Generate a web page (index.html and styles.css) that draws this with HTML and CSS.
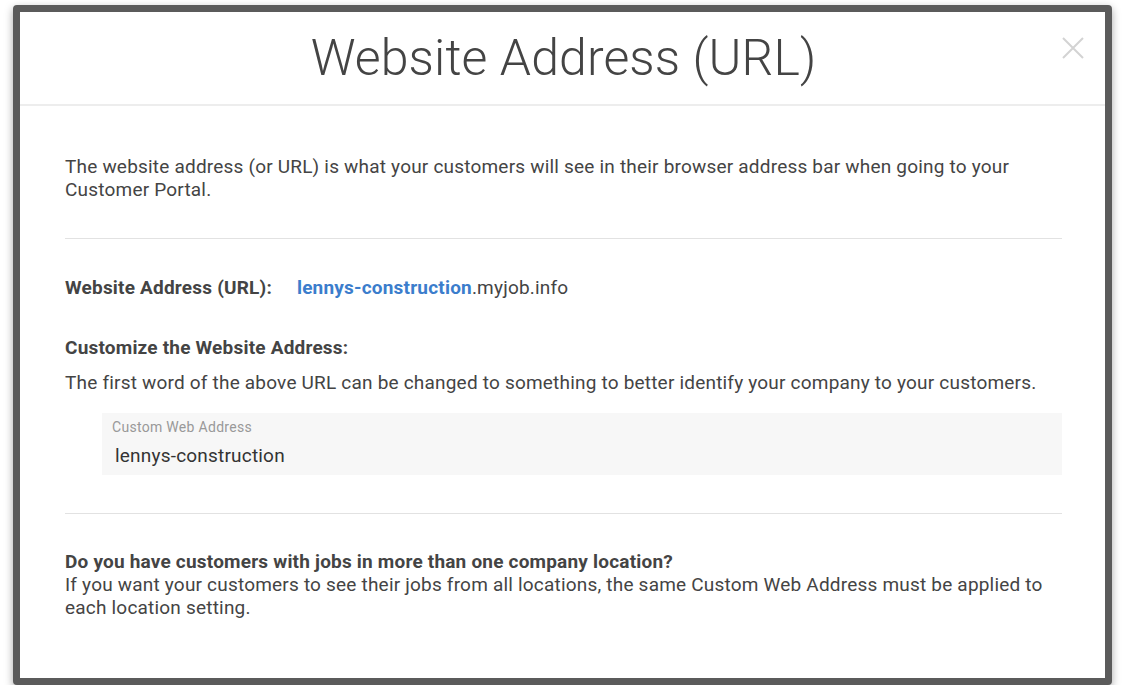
FILE: index.html
```html
<!DOCTYPE html>
<html>
<head>
  <title>Website Address (URL)</title>
  <meta name="viewport" content="width=device-width, initial-scale=1.0">
  <link rel="stylesheet" href="styles.css">
</head>
<body>

  <div class="modal">
    <div class="modal-header">
      <h1>Website Address (URL)</h1>
      <button class="close-btn" aria-label="Close">
        <svg width="22" height="22" viewBox="0 0 22 22">
          <path d="M1 1 L21 21 M21 1 L1 21" stroke="#d3d3d3" stroke-width="2" fill="none"/>
        </svg>
      </button>
    </div>

    <div class="modal-body">
      <p class="intro">The website address (or URL) is what your customers will see in their browser address bar when going to your Customer Portal.</p>

      <hr>

      <div class="url-row">
        <strong>Website Address (URL):</strong>
        <span class="url"><a href="#">lennys-construction</a>.myjob.info</span>
      </div>

      <h3>Customize the Website Address:</h3>
      <p class="help">The first word of the above URL can be changed to something to better identify your company to your customers.</p>

      <div class="field">
        <label for="custom-address">Custom Web Address</label>
        <input type="text" id="custom-address" value="lennys-construction">
      </div>

      <hr class="lower">

      <h3 class="question">Do you have customers with jobs in more than one company location?</h3>
      <p class="note">If you want your customers to see their jobs from all locations, the same Custom Web Address must be applied to each location setting.</p>
    </div>
  </div>

</body>
</html>
```

FILE: styles.css
```css
body {
  margin: 0;
  background-color: #fff;
  font-family: Roboto, "Liberation Sans", sans-serif;
  color: #444;
}
.modal {
  margin: 5px 0 0 13px;
  width: 1085px;
  height: 666px;
  border: 7px solid #5b5b5b;
  border-radius: 4px;
  background-color: #fff;
  box-shadow: 0 3px 8px rgba(0, 0, 0, 0.35);
  overflow: hidden;
}
.modal-header {
  position: relative;
  height: 92px;
  border-bottom: 2px solid #ededed;
  display: flex;
  align-items: center;
  justify-content: center;
}
.modal-header h1 {
  margin: 0 0 0 2px;
  font-weight: 300;
  font-size: 50px;
  color: #444;
  letter-spacing: 0.1px;
}
.close-btn {
  position: absolute;
  top: 25px;
  right: 21px;
  background: none;
  border: none;
  padding: 0;
  cursor: pointer;
}
.modal-body {
  padding: 49px 43px 0 45px;
  font-size: 19px;
  line-height: 23px;
  letter-spacing: 0.2px;
}
.modal-body p {
  margin: 0;
}
hr {
  border: none;
  border-top: 1px solid #e2e2e2;
  margin: 37px 0 0;
}
.url-row {
  margin-top: 37px;
}
.url {
  margin-left: 20px;
}
.url a {
  color: #3b7dcc;
  font-weight: bold;
  text-decoration: none;
}
h3 {
  margin: 37px 0 0;
  font-size: 19px;
  line-height: 23px;
  font-weight: bold;
}
.modal-body .help {
  margin-top: 12px;
}
.field {
  margin: 19px 0 0 37px;
  background-color: #f7f7f7;
  padding: 6px 10px 8px 10px;
}
.field label {
  display: block;
  font-size: 14px;
  line-height: 16px;
  letter-spacing: 0.3px;
  color: #999;
}
.field input {
  display: block;
  width: 100%;
  height: 24px;
  margin-top: 8px;
  border: none;
  background: transparent;
  padding: 0 3px;
  font-family: inherit;
  font-size: 19px;
  letter-spacing: 0.2px;
  color: #333;
  outline: none;
}
hr.lower {
  margin-top: 38px;
}
.question {
  margin-top: 36px;
}
```
